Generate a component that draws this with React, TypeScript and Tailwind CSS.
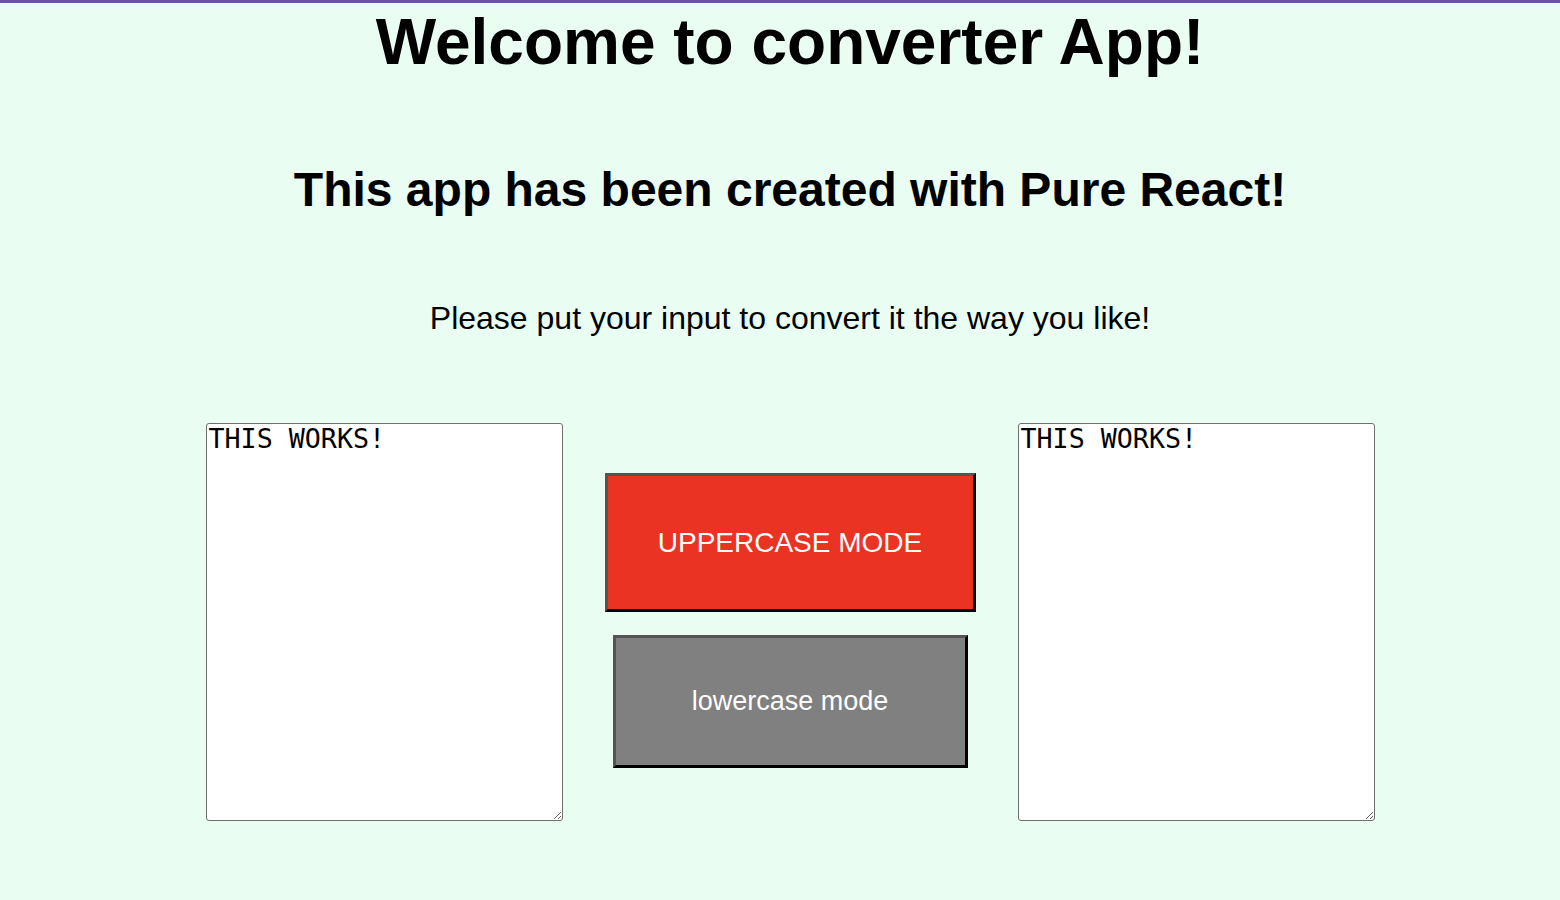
import { useState } from "react";

export default function App() {
  const [text, setText] = useState("THIS WORKS!");
  const [mode, setMode] = useState<"upper" | "lower">("upper");
  const output = mode === "upper" ? text.toUpperCase() : text.toLowerCase();

  return (
    <div className="min-h-[900px] w-full bg-[#e9fdf3] border-t-[3px] border-[#6c52a8] font-['Liberation_Sans',Arial,sans-serif] text-black">
      <div className="flex flex-col items-center pl-[20px]">
        <h1 className="mt-[2px] text-[64px] leading-[74px] font-bold">Welcome to converter App!</h1>
        <h2 className="mt-[83px] text-[48px] leading-[55px] font-bold">
          This app has been created with Pure React!
        </h2>
        <p className="mt-[83px] text-[32px] leading-[37px]">
          Please put your input to convert it the way you like!
        </p>

        <div className="mt-[86px] flex items-start gap-[42px]">
          <textarea
            value={text}
            onChange={(e) => setText(e.target.value)}
            className="w-[357px] h-[398px] bg-white border border-[#6f6f6f] rounded-[3px] px-[2px] pt-0 font-['DejaVu_Sans_Mono',monospace] text-[26.67px] leading-[30px] outline-none"
          />

          <div className="mt-[50px] flex flex-col items-center gap-[23px]">
            <button
              onClick={() => setMode("upper")}
              className="w-[371px] h-[139px] bg-[#ea3323] text-white text-[28px] border-[3px] border-t-[#545454] border-l-[#545454] border-b-black border-r-black"
            >
              UPPERCASE MODE
            </button>
            <button
              onClick={() => setMode("lower")}
              className="w-[355px] h-[133px] bg-[#808080] text-white text-[27px] border-[3px] border-t-[#545454] border-l-[#545454] border-b-black border-r-black"
            >
              lowercase mode
            </button>
          </div>

          <textarea
            value={output}
            readOnly
            className="w-[357px] h-[398px] bg-white border border-[#6f6f6f] rounded-[3px] px-[2px] pt-0 font-['DejaVu_Sans_Mono',monospace] text-[26.67px] leading-[30px] outline-none"
          />
        </div>
      </div>
    </div>
  );
}
